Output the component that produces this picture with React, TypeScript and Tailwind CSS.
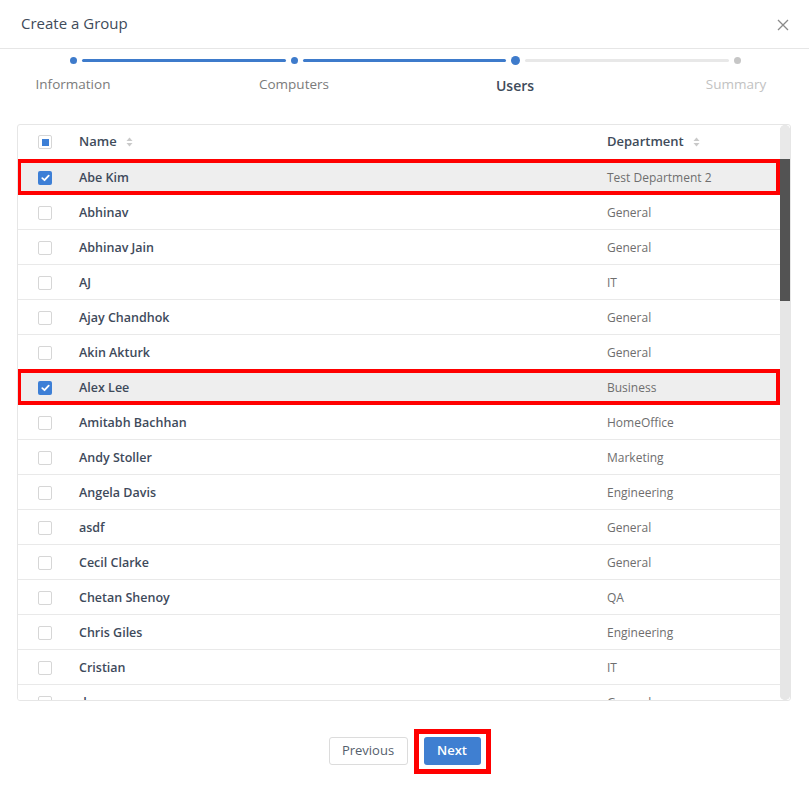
import React from "react";

type Row = { name: string; dept: string; selected?: boolean };

const rows: Row[] = [
  { name: "Abe Kim", dept: "Test Department 2", selected: true },
  { name: "Abhinav", dept: "General" },
  { name: "Abhinav Jain", dept: "General" },
  { name: "AJ", dept: "IT" },
  { name: "Ajay Chandhok", dept: "General" },
  { name: "Akin Akturk", dept: "General" },
  { name: "Alex Lee", dept: "Business", selected: true },
  { name: "Amitabh Bachhan", dept: "HomeOffice" },
  { name: "Andy Stoller", dept: "Marketing" },
  { name: "Angela Davis", dept: "Engineering" },
  { name: "asdf", dept: "General" },
  { name: "Cecil Clarke", dept: "General" },
  { name: "Chetan Shenoy", dept: "QA" },
  { name: "Chris Giles", dept: "Engineering" },
  { name: "Cristian", dept: "IT" },
  { name: "dev", dept: "General" },
];

function SortIcon() {
  return (
    <svg width="7" height="10" viewBox="0 0 7 10" className="ml-[9px] shrink-0">
      <path d="M3.5 0.5 L6.5 4 L0.5 4 Z" fill="#c9c9c9" />
      <path d="M3.5 9.5 L6.5 6 L0.5 6 Z" fill="#c9c9c9" />
    </svg>
  );
}

function Checkbox({ state }: { state: "off" | "on" | "partial" }) {
  if (state === "on") {
    return (
      <span className="flex h-[14px] w-[14px] items-center justify-center rounded-[2px] bg-[#3d7fd6]">
        <svg width="9" height="8" viewBox="0 0 9 8">
          <path d="M1.3 4.2 L3.5 6.2 L7.7 1.6" fill="none" stroke="#ffffff" strokeWidth="1.8" strokeLinecap="round" strokeLinejoin="round" />
        </svg>
      </span>
    );
  }
  return (
    <span className="flex h-[14px] w-[14px] items-center justify-center rounded-[2px] border border-[#d6d6d6] bg-white">
      {state === "partial" && <span className="block h-[7px] w-[7px] bg-[#3d7fd6]" />}
    </span>
  );
}

function Dot({ size, color }: { size: number; color: string }) {
  return (
    <span
      className={`block shrink-0 rounded-full ${size === 9 ? "h-[9px] w-[9px]" : "h-[7px] w-[7px]"} ${color}`}
    />
  );
}

export default function App() {
  return (
    <div className="flex h-[790px] w-full flex-col bg-white font-['Open_Sans',sans-serif] text-[#3e4a5b]">
      {/* Header */}
      <div className="flex h-[49px] shrink-0 items-center justify-between border-b border-[#e6e6e6] pl-[21px] pr-[20px]">
        <span className="pb-[2px] text-[15px] text-[#404b5a]">Create a Group</span>
        <svg width="12" height="12" viewBox="0 0 12 12" className="mt-[2px]">
          <path d="M1 1 L11 11 M11 1 L1 11" stroke="#8a8a8a" strokeWidth="1.3" />
        </svg>
      </div>

      {/* Stepper */}
      <div className="mt-[7px] flex h-[9px] items-center pl-[70px] pr-[68px]">
        <Dot size={7} color="bg-[#3e7bcb]" />
        <span className="mx-[5px] h-[3px] flex-1 rounded-full bg-[#3e7bcb]" />
        <Dot size={7} color="bg-[#3e7bcb]" />
        <span className="mx-[5px] h-[3px] flex-1 rounded-full bg-[#3e7bcb]" />
        <Dot size={9} color="bg-[#3e7bcb]" />
        <span className="mx-[5px] h-[3px] flex-1 rounded-full bg-[#e8e8e8]" />
        <Dot size={7} color="bg-[#c6c6c6]" />
      </div>
      <div className="mt-[9px] flex justify-between px-[17px] text-[14px] leading-[20px]">
        <span className="w-[112px] text-center text-[13.5px] text-[#7b7b7b]">Information</span>
        <span className="w-[112px] text-center text-[13.5px] text-[#7b7b7b]">Computers</span>
        <span className="w-[112px] pt-[2px] text-center font-semibold text-[#404b5a]">Users</span>
        <span className="w-[112px] text-center text-[13.5px] text-[#c2c2c2]">Summary</span>
      </div>

      {/* Table */}
      <div className="ml-[17px] mr-[18px] mt-[28px] flex h-[577px] shrink-0 overflow-hidden rounded-[3px] border border-[#e6e6e6]">
        <div className="flex min-w-0 flex-1 flex-col overflow-hidden">
          <div className="flex h-[35px] shrink-0 items-center border-b border-[#e9e9e9] text-[13px] font-semibold text-[#404b5a]">
            <div className="w-[61px] shrink-0 pl-[20px]">
              <Checkbox state="partial" />
            </div>
            <div className="flex w-[528px] shrink-0 items-center">
              Name
              <SortIcon />
            </div>
            <div className="flex items-center">
              Department
              <SortIcon />
            </div>
          </div>
          {rows.map((r) => (
            <div
              key={r.name}
              className={`relative flex h-[35px] shrink-0 items-center border-b border-[#e9e9e9] pt-[1px] leading-[20px] ${
                r.selected ? "bg-[#eeeeee]" : "bg-white"
              }`}
            >
              <div className="w-[61px] shrink-0 pl-[20px]">
                <Checkbox state={r.selected ? "on" : "off"} />
              </div>
              <div className="w-[528px] shrink-0 pt-[1px] text-[12.5px] font-semibold text-[#3e4a5b]">{r.name}</div>
              <div className="text-[12px] text-[#6e6e6e]">{r.dept}</div>
              {r.selected && (
                <span className="pointer-events-none absolute -top-[1px] bottom-[-1px] left-[-1px] right-0 border-[4px] border-[#ff0000]" />
              )}
            </div>
          ))}
        </div>
        {/* Scrollbar */}
        <div className="flex w-[10px] shrink-0 flex-col overflow-hidden rounded-full bg-[#e3e3e3]">
          <div className="h-[34px] shrink-0 rounded-t-full bg-[#e9e9e9]" />
          <div className="h-[142px] shrink-0 bg-[#535353]" />
          <div className="flex-1 bg-[#e6e6e6]" />
        </div>
      </div>

      {/* Footer buttons */}
      <div className="mt-[36px] flex items-center justify-center gap-[16px]">
        <button className="h-[28px] w-[79px] rounded-[3px] border border-[#dcdcdc] bg-white text-[13px] text-[#555f6d]">
          Previous
        </button>
        <div className="relative">
          <button className="h-[28px] w-[57px] rounded-[3px] bg-[#3f7fd1] text-[13px] font-semibold text-white">
            Next
          </button>
          <span className="pointer-events-none absolute -bottom-[9px] -left-[10px] -right-[10px] -top-[8px] border-[5px] border-[#ff0000]" />
        </div>
      </div>
    </div>
  );
}
